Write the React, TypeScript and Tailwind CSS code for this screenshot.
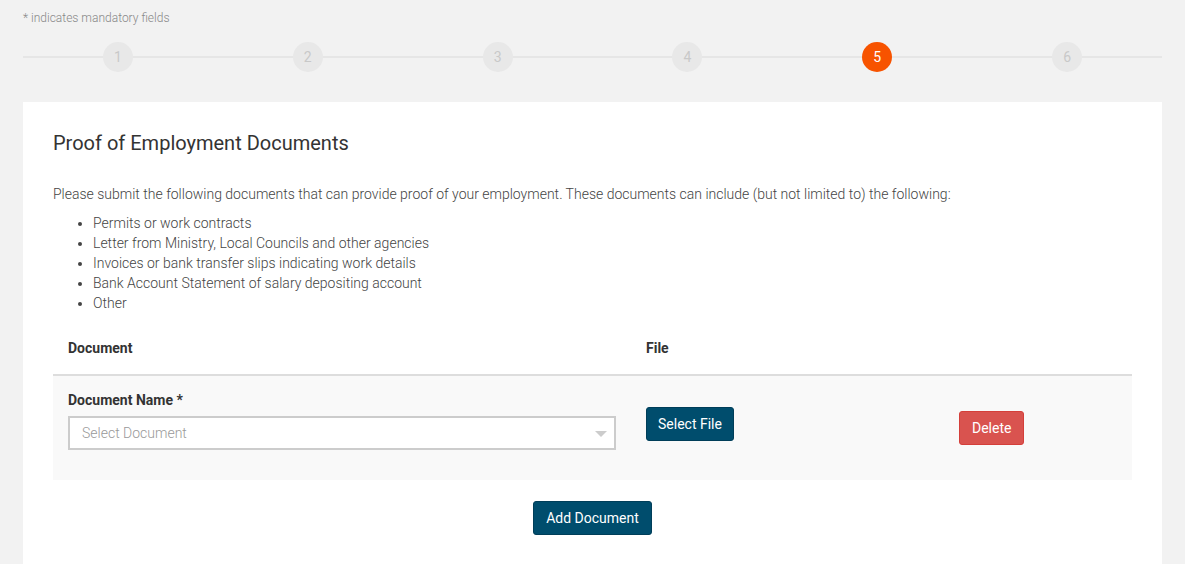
import React from 'react';

const steps = [1, 2, 3, 4, 5, 6];
const activeStep = 5;

const proofItems = [
  'Permits or work contracts',
  'Letter from Ministry, Local Councils and other agencies',
  'Invoices or bank transfer slips indicating work details',
  'Bank Account Statement of salary depositing account',
  'Other',
];

const Stepper: React.FC = () => (
  <div className="relative mt-[16px] h-[30px]">
    <div className="absolute left-0 right-0 top-[14px] h-[2px] bg-[#e6e6e6]" />
    <div className="relative grid grid-cols-6">
      {steps.map((s) => (
        <div key={s} className="flex justify-center">
          <div
            className={
              s === activeStep
                ? 'flex h-[30px] w-[30px] items-center justify-center rounded-full bg-[#f75300] text-[14px] text-white'
                : 'flex h-[30px] w-[30px] items-center justify-center rounded-full bg-[#e8e8e8] text-[14px] text-[#c8c8c8]'
            }
          >
            {s}
          </div>
        </div>
      ))}
    </div>
  </div>
);

export default function App() {
  return (
    <div className="min-h-screen bg-[#f2f2f2] px-[23px] pt-[10px] font-['Roboto',sans-serif] text-[14px] text-[#555]">
      <p className="text-[12px] font-light leading-[16px] text-[#888]">* indicates mandatory fields</p>

      <Stepper />

      <div className="mt-[30px] bg-white px-[30px] pb-[40px] pt-[27px]">
        <h2 className="text-[20px] leading-[28px] text-[#333]">Proof of Employment Documents</h2>

        <p className="mt-[27px] font-light leading-[20px] text-[#444]">
          Please submit the following documents that can provide proof of your employment. These documents can include (but not limited to) the following:
        </p>

        <ul className="mt-[9px] list-disc pl-[40px] font-light leading-[20px] text-[#444]">
          {proofItems.map((item) => (
            <li key={item}>{item}</li>
          ))}
        </ul>

        {/* tabela de documentos */}
        <div className="mt-[25px]">
          <div className="grid grid-cols-[578px_313px_1fr] border-b-2 border-[#dddddd] pb-[16px] font-bold leading-[20px] text-[#333]">
            <div className="px-[15px]">Document</div>
            <div className="px-[15px]">File</div>
            <div />
          </div>

          <div className="grid h-[104px] grid-cols-[578px_313px_1fr] bg-[#f9f9f9]">
            <div className="px-[15px] pt-[14px]">
              <label className="block font-bold leading-[20px] text-[#333]">Document Name *</label>
              <div className="relative mt-[6px] flex h-[34px] items-center border-2 border-[#cccccc] bg-white px-[12px] font-light text-[#999]">
                Select Document
                <svg className="absolute right-[7px] top-[13px]" width="12" height="6" viewBox="0 0 12 6">
                  <path d="M0 0 L12 0 L6 6 Z" fill="#cccccc" />
                </svg>
              </div>
            </div>
            <div className="px-[15px] pt-[31px]">
              <button className="h-[34px] rounded-[3px] border border-[#003e59] bg-[#004d6d] px-[11px] text-white">
                Select File
              </button>
            </div>
            <div className="flex items-center px-[15px]">
              <button className="h-[34px] rounded-[3px] border border-[#d43f3a] bg-[#d9534f] px-[12px] text-white">
                Delete
              </button>
            </div>
          </div>

          <div className="mt-[21px] flex justify-center">
            <button className="h-[34px] rounded-[3px] border border-[#003e59] bg-[#004d6d] px-[12px] text-white">
              Add Document
            </button>
          </div>
        </div>
      </div>
    </div>
  );
}
